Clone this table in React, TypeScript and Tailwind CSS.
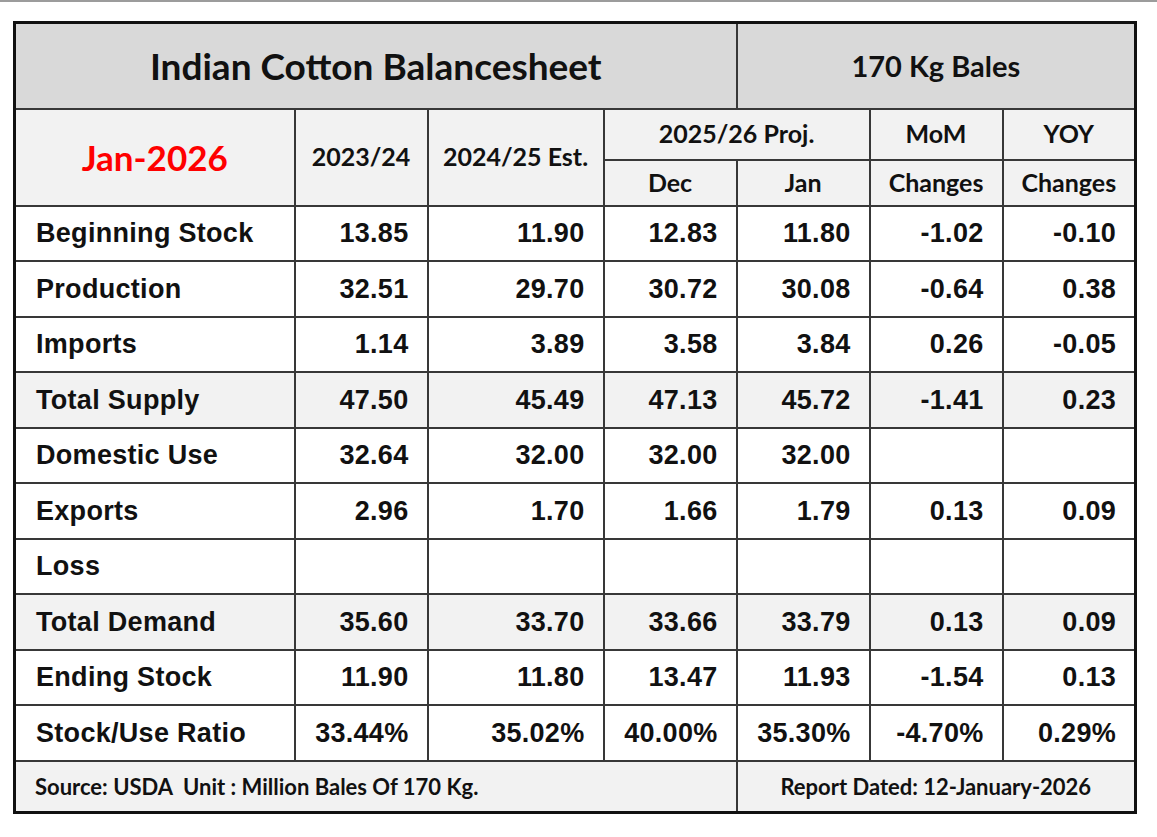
const head = "font-['Lato','Open_Sans',sans-serif] font-bold";
const num = "font-['Liberation_Sans',Arial,sans-serif] font-bold";

type Row = { label: string; vals: string[]; shade?: boolean };

const rows: Row[] = [
  { label: "Beginning Stock", vals: ["13.85", "11.90", "12.83", "11.80", "-1.02", "-0.10"] },
  { label: "Production", vals: ["32.51", "29.70", "30.72", "30.08", "-0.64", "0.38"] },
  { label: "Imports", vals: ["1.14", "3.89", "3.58", "3.84", "0.26", "-0.05"] },
  { label: "Total Supply", vals: ["47.50", "45.49", "47.13", "45.72", "-1.41", "0.23"], shade: true },
  { label: "Domestic Use", vals: ["32.64", "32.00", "32.00", "32.00", "", ""] },
  { label: "Exports", vals: ["2.96", "1.70", "1.66", "1.79", "0.13", "0.09"] },
  { label: "Loss", vals: ["", "", "", "", "", ""] },
  { label: "Total Demand", vals: ["35.60", "33.70", "33.66", "33.79", "0.13", "0.09"], shade: true },
  { label: "Ending Stock", vals: ["11.90", "11.80", "13.47", "11.93", "-1.54", "0.13"] },
  { label: "Stock/Use Ratio", vals: ["33.44%", "35.02%", "40.00%", "35.30%", "-4.70%", "0.29%"] },
];

const cell = "border-2 border-[#383838]";
const sub = `${cell} ${head} text-center text-[25px]`;

export default function App() {
  return (
    <div className="w-[1157px] h-[837px] bg-white overflow-hidden">
      <div className="h-[2px] bg-[#9c9c9c]" />
      <table className="ml-[13px] mt-[19px] w-[1121px] table-fixed border-collapse border-[3px] border-[#111] text-[#111]">
        <colgroup>
          <col className="w-[280px]" />
          <col className="w-[133px]" />
          <col className="w-[176px]" />
          <col className="w-[133px]" />
          <col className="w-[133px]" />
          <col className="w-[133px]" />
          <col className="w-[133px]" />
        </colgroup>
        <tbody>
          <tr className="h-[86px] bg-[#d9d9d9]">
            <td colSpan={4} className={`${cell} ${head} text-center text-[37px]`}>
              Indian Cotton Balancesheet
            </td>
            <td colSpan={3} className={`${cell} ${head} text-center text-[29px]`}>
              170 Kg Bales
            </td>
          </tr>
          <tr className="h-[51px] bg-[#f2f2f2]">
            <td rowSpan={2} className={`${cell} ${head} text-center text-[35px] text-[#ff0000]`}>
              Jan-2026
            </td>
            <td rowSpan={2} className={sub}>2023/24</td>
            <td rowSpan={2} className={sub}>2024/25 Est.</td>
            <td colSpan={2} className={sub}>2025/26 Proj.</td>
            <td className={sub}>MoM</td>
            <td className={sub}>YOY</td>
          </tr>
          <tr className="h-[46px] bg-[#f2f2f2]">
            <td className={sub}>Dec</td>
            <td className={sub}>Jan</td>
            <td className={sub}>Changes</td>
            <td className={sub}>Changes</td>
          </tr>
          {rows.map((r) => (
            <tr key={r.label} className={`h-[55.5px] ${r.shade ? "bg-[#f2f2f2]" : "bg-white"}`}>
              <td className={`${cell} ${num} text-[27px] tracking-[0.3px] pl-[20px]`}>{r.label}</td>
              {r.vals.map((v, i) => (
                <td key={i} className={`${cell} ${num} text-[27px] tracking-[0.3px] text-right pr-[18px]`}>
                  {v}
                </td>
              ))}
            </tr>
          ))}
          <tr className="h-[52px] bg-[#f2f2f2]">
            <td colSpan={4} className={`${cell} ${head} text-[22px] pl-[19px] whitespace-pre`}>
              {"Source: USDA  Unit : Million Bales Of 170 Kg."}
            </td>
            <td colSpan={3} className={`${cell} ${head} text-[22px] text-center`}>
              Report Dated: 12-January-2026
            </td>
          </tr>
        </tbody>
      </table>
    </div>
  );
}
